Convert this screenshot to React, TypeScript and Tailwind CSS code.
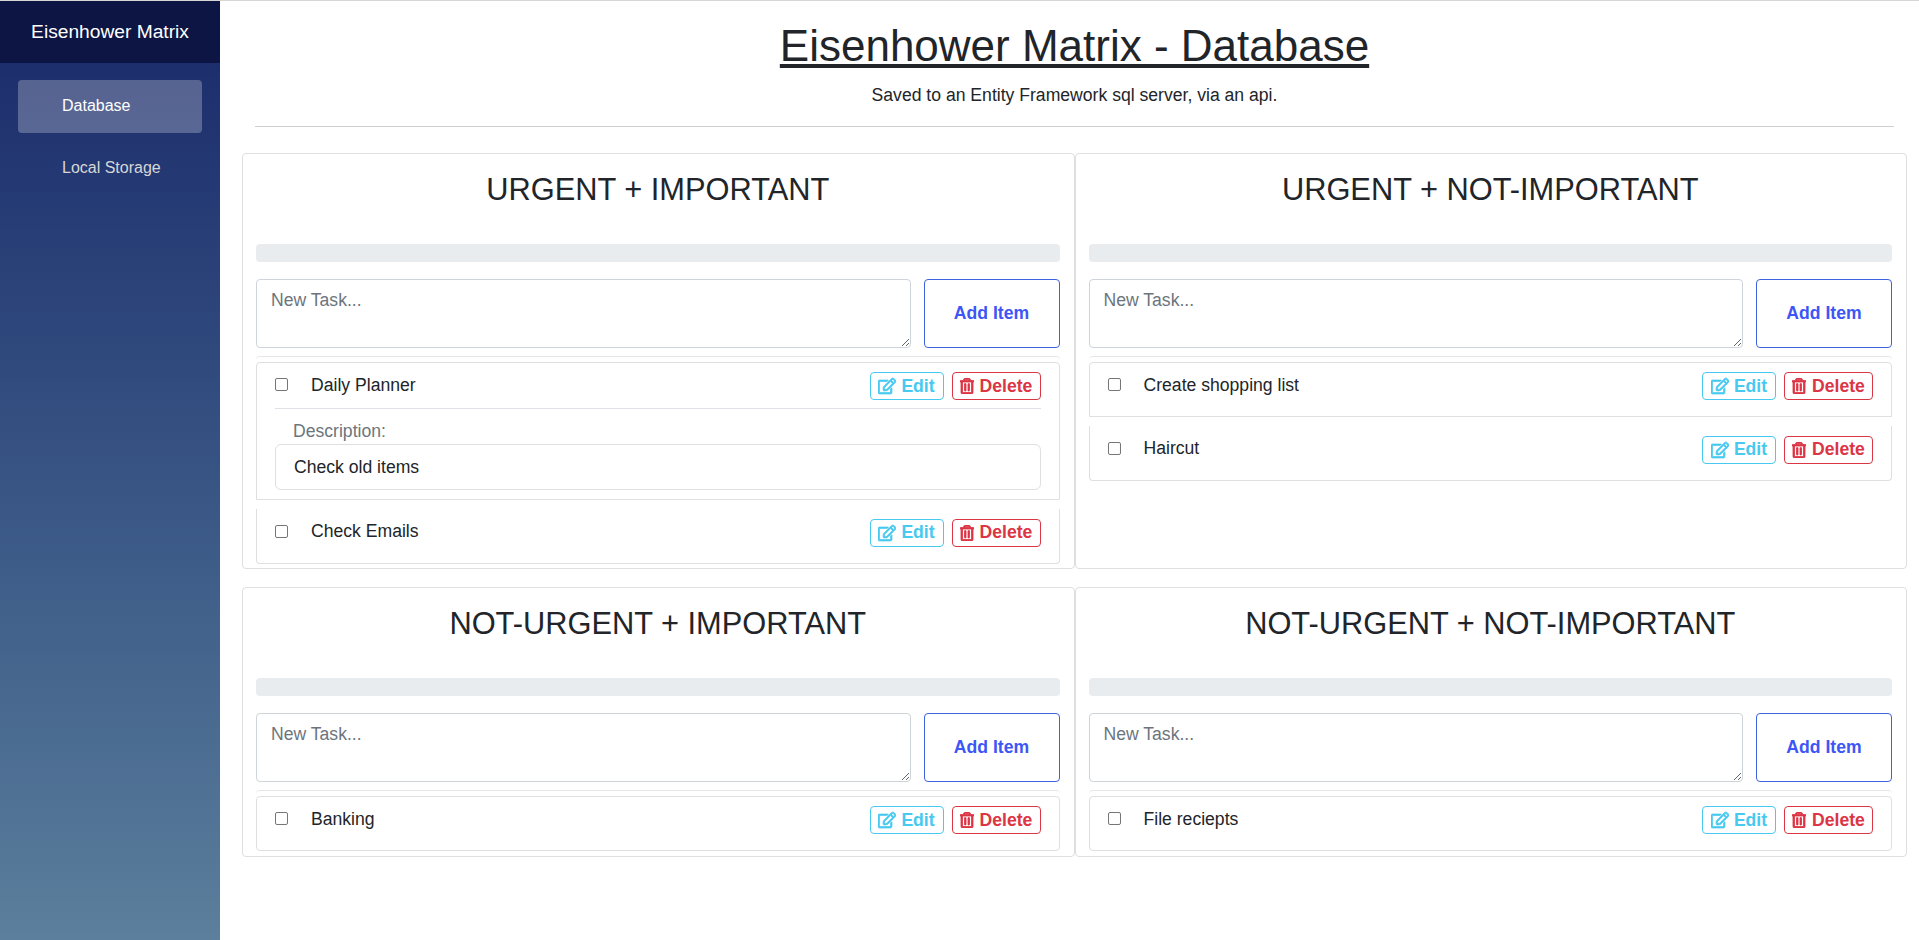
import { FaRegEdit, FaRegTrashAlt } from 'react-icons/fa'

interface Task {
  title: string
  description?: string
}

interface Quadrant {
  title: string
  tasks: Task[]
}

const quadrants: Quadrant[] = [
  {
    title: 'URGENT + IMPORTANT',
    tasks: [{ title: 'Daily Planner', description: 'Check old items' }, { title: 'Check Emails' }],
  },
  {
    title: 'URGENT + NOT-IMPORTANT',
    tasks: [{ title: 'Create shopping list' }, { title: 'Haircut' }],
  },
  { title: 'NOT-URGENT + IMPORTANT', tasks: [{ title: 'Banking' }] },
  { title: 'NOT-URGENT + NOT-IMPORTANT', tasks: [{ title: 'File reciepts' }] },
]

function Sidebar() {
  return (
    <aside className="w-[220px] shrink-0 bg-gradient-to-b from-[#1a2869] to-[#5b7f9c]">
      <div className="flex h-[62px] items-center justify-center bg-[#0c1544] text-[19.2px] text-white">
        Eisenhower Matrix
      </div>
      <nav className="flex flex-col gap-[8px] px-[18px] pt-[17px] text-base">
        <a className="flex h-[53px] items-center rounded bg-white/25 pb-[2px] pl-[44px] text-white">Database</a>
        <a className="flex h-[53px] items-center pl-[44px] text-[#d7d7d7]">Local Storage</a>
      </nav>
    </aside>
  )
}

function TaskItem({ task, first, last }: { task: Task; first: boolean; last: boolean }) {
  return (
    <li
      className={`border-x border-b border-[#dfdfdf] px-[18px] ${first ? 'rounded-t border-t pt-[9px]' : 'pt-[10px]'} ${
        last ? 'rounded-b' : ''
      }`}
    >
      <div className="flex h-[28px] items-center">
        <input type="checkbox" readOnly className="-mt-[3px] h-[13px] w-[13px] appearance-none rounded-[2px] border border-[#767676] bg-white" />
        <span className="ml-[23px] -mt-[2px] flex-1">{task.title}</span>
        <button className="flex h-[28px] w-[74px] items-center justify-center gap-[5px] rounded border border-[#48c9f0] font-bold text-[#48c9f0]">
          <FaRegEdit className="h-[18px] w-[18px]" stroke="currentColor" strokeWidth={22} />
          Edit
        </button>
        <button className="ml-[8px] flex h-[28px] w-[89px] items-center justify-center gap-[6px] rounded border border-[#dc3545] font-bold text-[#dc3545]">
          <FaRegTrashAlt className="h-[16px] w-[14px]" stroke="currentColor" strokeWidth={26} />
          Delete
        </button>
      </div>
      {task.description ? (
        <div className="mt-[8px] mb-[9px] border-t border-[#e0e0e6]">
          <div className="mt-[10px] pl-[18px] leading-[25px] text-[#6c757d]">Description:</div>
          <div className="flex h-[46px] items-center rounded-md border border-[#dfdfdf] pl-[18px]">
            {task.description}
          </div>
        </div>
      ) : (
        <div className="h-[16px]" />
      )}
    </li>
  )
}

function QuadrantCard({ quadrant }: { quadrant: Quadrant }) {
  return (
    <section className="rounded border border-[#dfdfdf] pr-[14px] pb-[4.5px] pl-[13px]">
      <h3 className="pt-[14px] text-center text-[30.8px] leading-[44px] text-[#212529]">{quadrant.title}</h3>
      <div className="mt-[32px] h-[18px] rounded bg-[#e9ecef]" />
      <div className="mt-[17px] flex gap-[13px]">
        <textarea
          readOnly
          placeholder="New Task..."
          className="h-[69px] flex-1 resize rounded border border-[#ced4da] px-[14px] py-[7px] placeholder:text-[#6c757d]"
        />
        <button className="h-[69px] w-[136px] rounded border border-[#3f63e0] font-bold text-[#3d56f5]">Add Item</button>
      </div>
      <div className="mt-[8px] h-[6px] rounded-t border-t border-[#e6e6e6]" />
      <ul className="flex flex-col gap-[8.5px]">
        {quadrant.tasks.map((task, i) => (
          <TaskItem key={task.title} task={task} first={i === 0} last={i === quadrant.tasks.length - 1} />
        ))}
      </ul>
    </section>
  )
}

export default function App() {
  return (
    <div className="flex min-h-[940px] border-t border-[#d6d6d6] bg-white font-['Liberation_Sans',Arial,sans-serif] text-[17.6px] text-[#212529]">
      <Sidebar />
      <main className="flex-1 pr-[12px] pl-[22px]">
        <div className="px-[13px] text-center">
          <h1 className="pt-[20px] text-[44px] leading-[50px] underline">Eisenhower Matrix - Database</h1>
          <p className="mt-[12px] leading-[24px]">Saved to an Entity Framework sql server, via an api.</p>
          <hr className="mt-[19px] border-[#cfcfcf]" />
        </div>
        <div className="mt-[26px] grid grid-cols-2 gap-y-[18px]">
          {quadrants.map((q) => (
            <QuadrantCard key={q.title} quadrant={q} />
          ))}
        </div>
      </main>
    </div>
  )
}
